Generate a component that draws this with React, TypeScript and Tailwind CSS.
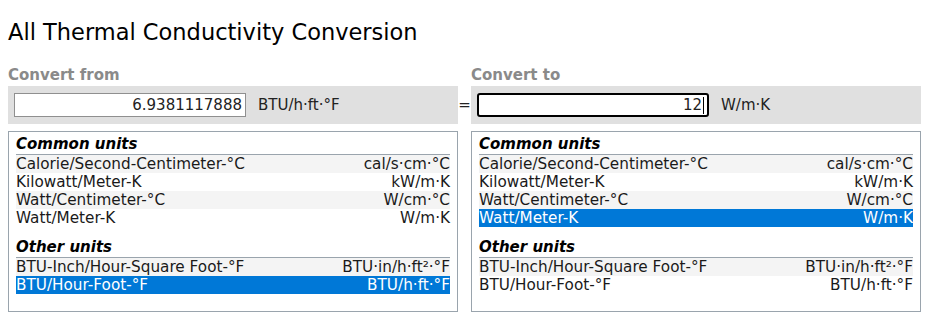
const common = [
  { name: "Calorie/Second-Centimeter-°C", sym: "cal/s·cm·°C" },
  { name: "Kilowatt/Meter-K", sym: "kW/m·K" },
  { name: "Watt/Centimeter-°C", sym: "W/cm·°C" },
  { name: "Watt/Meter-K", sym: "W/m·K" },
];

const other = [
  { name: "BTU-Inch/Hour-Square Foot-°F", sym: "BTU·in/h·ft²·°F" },
  { name: "BTU/Hour-Foot-°F", sym: "BTU/h·ft·°F" },
];

type Unit = { name: string; sym: string };

function Group({ title, units, selected }: { title: string; units: Unit[]; selected: string }) {
  return (
    <div>
      <div className="font-bold italic text-[15px] leading-[18px] text-black border-b border-[#9aa4ad] pb-px">{title}</div>
      {units.map((u, i) => {
        const on = u.name === selected;
        const bg = on ? "bg-[#0078d7] text-white" : i % 2 === 0 ? "bg-[#f4f4f4] text-[#1a1a1a]" : "bg-white text-[#1a1a1a]";
        return (
          <div key={u.name} className={`flex justify-between h-[18px] leading-[18px] text-[15.25px] ${bg}`}>
            <span>{u.name}</span>
            <span>{u.sym}</span>
          </div>
        );
      })}
    </div>
  );
}

function Side({ label, value, unit, selected, focused }: { label: string; value: string; unit: string; selected: string; focused?: boolean }) {
  return (
    <div className="flex flex-col">
      <div className="font-bold text-[15px] leading-[18px] text-[#8a8a8a] h-[18px]">{label}</div>
      <div className="mt-[2px] h-[38px] bg-[#e0e0e0] flex items-center pl-[6px]">
        <div
          className={`w-[232px] h-[24px] bg-white flex items-center justify-end pr-[3px] text-[15px] text-[#222] ${
            focused ? "border-2 border-black rounded-[3px]" : "border border-[#8f8f8f]"
          }`}
        >
          {value}
          {focused && <span className="inline-block w-px h-[17px] bg-black ml-px" />}
        </div>
        <span className="ml-[12px] text-[15px] text-[#222]">{unit}</span>
      </div>
      <div className="mt-[7px] h-[181px] border border-[#9aa4ad] px-[7px] pt-[3px] text-[15px]">
        <Group title="Common units" units={common} selected={selected} />
        <div className="h-[11px]" />
        <Group title="Other units" units={other} selected={selected} />
      </div>
    </div>
  );
}

export default function App() {
  return (
    <div className="w-[935px] h-[316px] bg-white overflow-hidden" style={{ fontFamily: '"DejaVu Sans", Verdana, sans-serif' }}>
      <h1 className="pl-[8px] pt-[17px] text-[22.5px] leading-[30px] text-black font-normal">All Thermal Conductivity Conversion</h1>
      <div className="mt-[19px] pl-[8px] grid grid-cols-[450px_13px_450px]">
        <Side label="Convert from" value="6.9381117888" unit="BTU/h·ft·°F" selected="BTU/Hour-Foot-°F" />
        <div className="pt-[20px] h-[58px] flex items-center justify-center text-[15px] text-[#222]">=</div>
        <Side label="Convert to" value="12" unit="W/m·K" selected="Watt/Meter-K" focused />
      </div>
    </div>
  );
}
